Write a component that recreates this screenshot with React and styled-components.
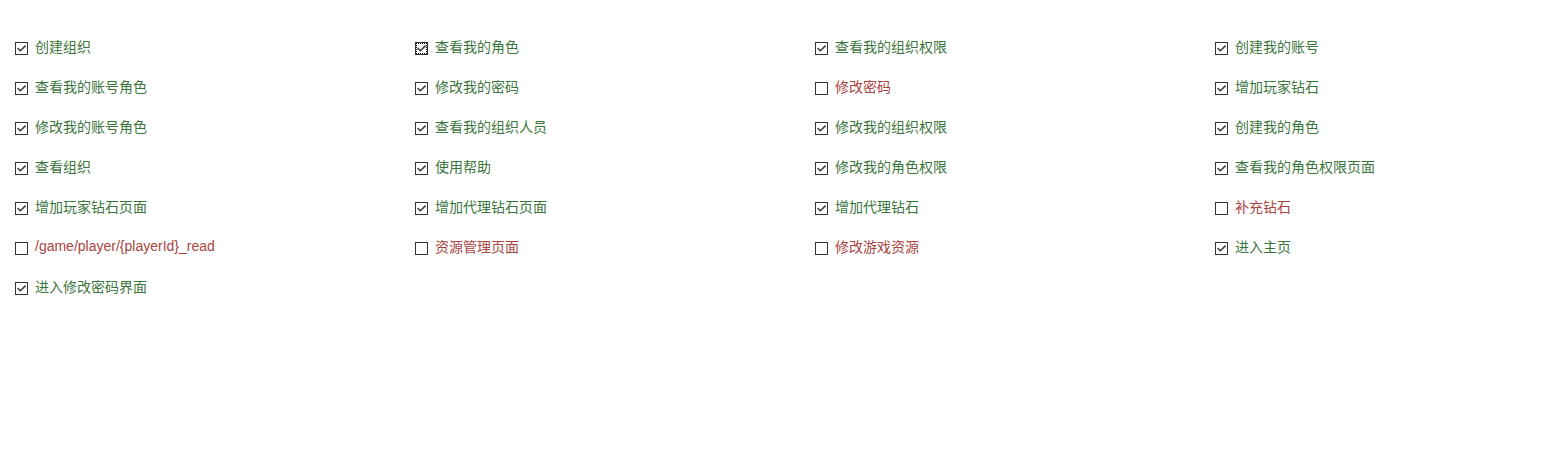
import React from "react";
import styled, { createGlobalStyle } from "styled-components";

const Global = createGlobalStyle`
  html, body { margin: 0; padding: 0; background: #fff; overflow: hidden; }
  body { margin: 8px; font-family: "Liberation Sans", "Noto Sans CJK SC", sans-serif; }
`;

const Grid = styled.div`
  display: grid;
  grid-template-columns: 400px 400px 400px 1fr;
  grid-auto-rows: 40px;
  padding: 18px 0 0 7px;
`;

const Item = styled.label`
  display: flex;
  align-items: center;
  gap: 7px;
  font-size: 14px;
  color: ${(p) => (p.$on ? "#3c763d" : "#a94442")};
  white-space: nowrap;
`;

const Box = styled.span`
  position: relative;
  box-sizing: border-box;
  width: 13px;
  height: 13px;
  border: 1px solid #333;
  background: #fff;
  flex: none;
  display: flex;
  align-items: center;
  justify-content: center;
  margin-top: 5px;
  ${(p) =>
    p.$focus &&
    `&::after { content: ""; position: absolute; inset: 0; border: 1px dotted #000; }`}
`;

const items = [
  ["创建组织", 1], ["查看我的角色", 1, true], ["查看我的组织权限", 1], ["创建我的账号", 1],
  ["查看我的账号角色", 1], ["修改我的密码", 1], ["修改密码", 0], ["增加玩家钻石", 1],
  ["修改我的账号角色", 1], ["查看我的组织人员", 1], ["修改我的组织权限", 1], ["创建我的角色", 1],
  ["查看组织", 1], ["使用帮助", 1], ["修改我的角色权限", 1], ["查看我的角色权限页面", 1],
  ["增加玩家钻石页面", 1], ["增加代理钻石页面", 1], ["增加代理钻石", 1], ["补充钻石", 0],
  ["/game/player/{playerId}_read", 0], ["资源管理页面", 0], ["修改游戏资源", 0], ["进入主页", 1],
  ["进入修改密码界面", 1],
];

const Check = () => (
  <svg width="11" height="11" viewBox="0 0 11 11">
    <path d="M1.6 5 L4.3 7.8 L9.6 2.6" fill="none" stroke="#333" strokeWidth="1.5" />
  </svg>
);

export default function App() {
  return (
    <>
      <Global />
      <Grid>
        {items.map(([t, on, focus], i) => (
          <Item key={i} $on={on}>
            <Box $focus={focus}>{on ? <Check /> : null}</Box>
            {t}
          </Item>
        ))}
      </Grid>
    </>
  );
}
